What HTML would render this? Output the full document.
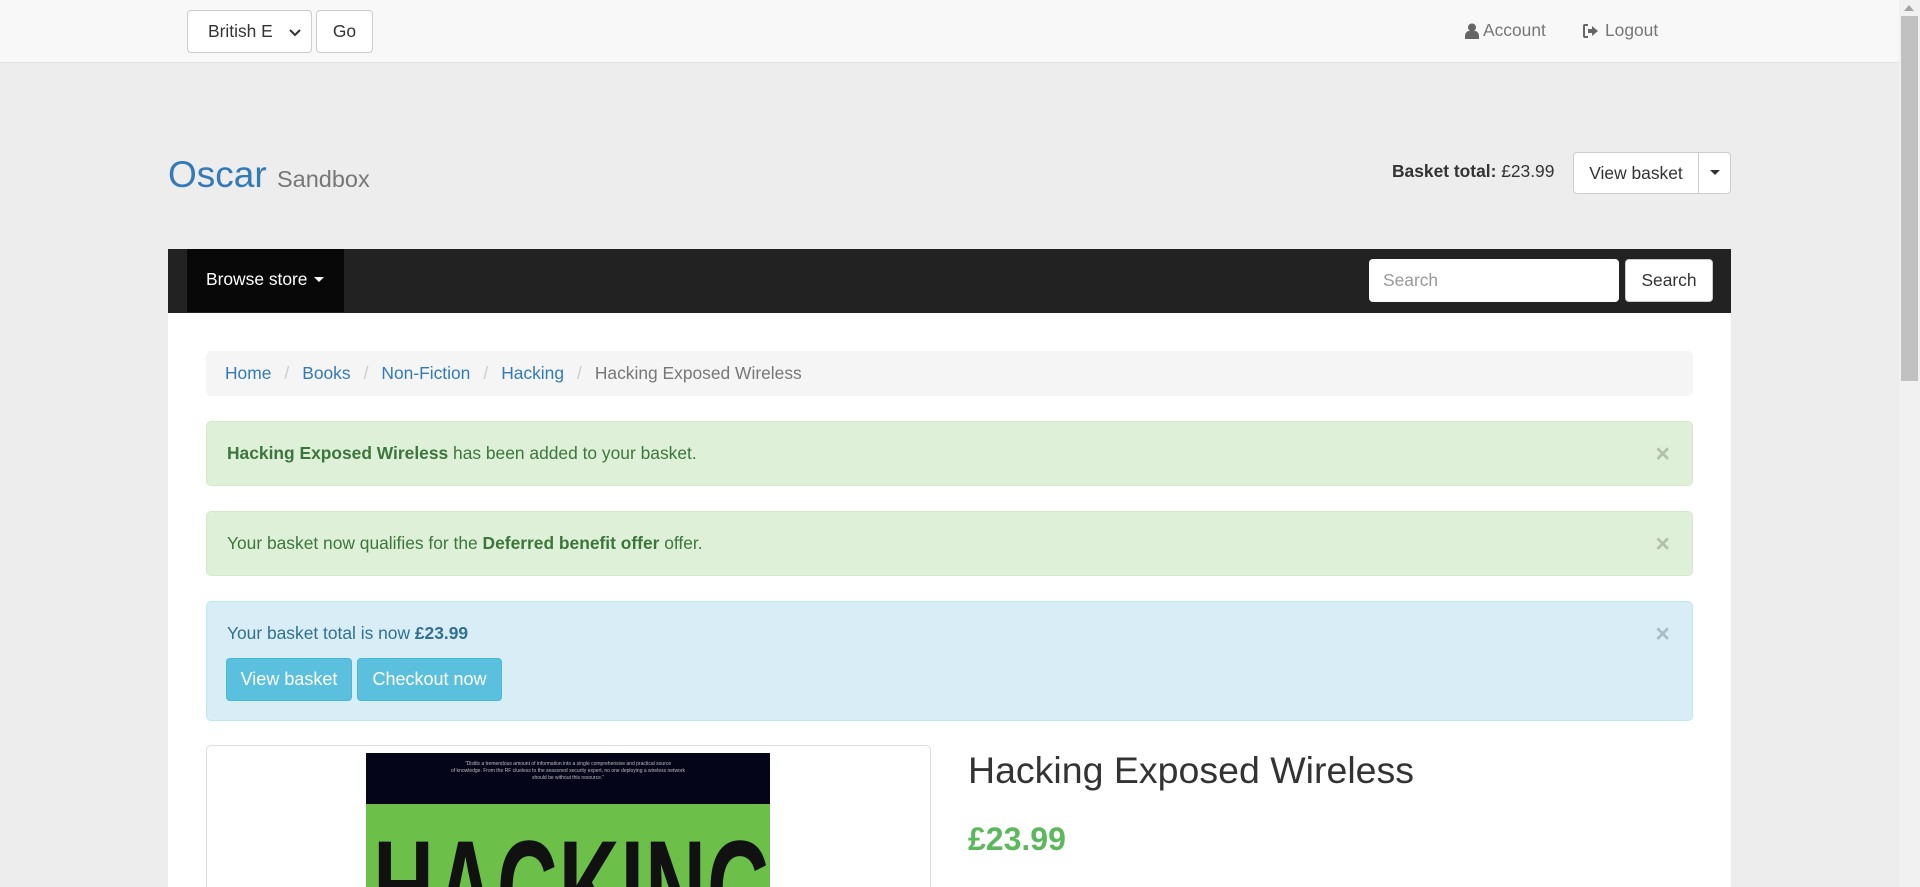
<!DOCTYPE html>
<html><head><meta charset="utf-8"><style>
*{box-sizing:border-box;margin:0;padding:0}
html,body{overflow:hidden}
body{width:1920px;height:887px;background:#ededed;font-family:"Liberation Sans",sans-serif;font-size:17.4px;color:#333;position:relative}
.abs{position:absolute}
.top{left:0;top:0;width:1899px;height:63px;background:#f8f8f8;border-bottom:1px solid #e3e3e3}
.btn{position:absolute;background:#fff;border:1px solid #ccc;border-radius:4px;display:flex;align-items:center;justify-content:center;color:#333}
.sb{left:1899px;top:0;width:21px;height:887px;background:#f1f1f1}
.alert{position:absolute;left:206px;width:1487px;border-radius:5px;border:1px solid}
.ok{background:#dff0d8;border-color:#d6e9c6;color:#3c763d}
.info{background:#d9edf7;border-color:#bce8f1;color:#31708f}
.x{position:absolute;right:22px;top:20px;font-size:25px;font-weight:bold;color:#000;opacity:.2;line-height:1}
.bc a{color:#337ab7}
.sep{color:#ccc;padding:0 13px}
</style></head><body>
<div class="abs top"></div>
<div class="btn" style="left:187px;top:10px;width:125px;height:43px;justify-content:flex-start;padding-left:20px">British E<svg style="position:absolute;right:10px;top:18px" width="12" height="8" viewBox="0 0 12 8"><path d="M1 1l5 5 5-5" stroke="#333" stroke-width="2" fill="none"/></svg></div>
<div class="btn" style="left:316px;top:10px;width:57px;height:43px">Go</div>
<svg class="abs" style="left:1465px;top:23px" width="14" height="16" viewBox="0 0 14 16"><circle cx="7" cy="4.5" r="4" fill="#666"/><path d="M0 16v-3c0-3 2-5 4-5h6c2 0 4 2 4 5v3z" fill="#666"/></svg>
<div class="abs" style="left:1483px;top:20px;color:#777">Account</div>
<svg class="abs" style="left:1583px;top:24px" width="16" height="14" viewBox="0 0 16 14"><path d="M5 1H2Q1 1 1 2v10q0 1 1 1h3" stroke="#666" stroke-width="2" fill="none"/><path d="M5 5h4V2l6 5-6 5V9H5z" fill="#666"/></svg>
<div class="abs" style="left:1605px;top:20px;color:#777">Logout</div>

<div class="abs" style="left:168px;top:154px;font-size:37px;color:#337ab7">Oscar <span style="font-size:23.5px;color:#777">Sandbox</span></div>
<div class="abs" style="left:1392px;top:161px"><b>Basket total:</b> £23.99</div>
<div class="btn" style="left:1573px;top:152px;width:126px;height:42px;border-radius:4px 0 0 4px">View basket</div>
<div class="btn" style="left:1698px;top:152px;width:33px;height:42px;border-radius:0 4px 4px 0"><svg width="10" height="6"><path d="M0 0h10L5 5z" fill="#333"/></svg></div>

<div class="abs" style="left:168px;top:249px;width:1563px;height:64px;background:#222"></div>
<div class="abs" style="left:187px;top:249px;width:157px;height:63px;background:#080808;color:#fff;padding:20px 0 0 19px">Browse store <svg width="10" height="6" style="vertical-align:middle;margin-left:2px"><path d="M0 0h10L5 5z" fill="#fff"/></svg></div>
<div class="abs" style="left:1369px;top:259px;width:250px;height:43px;background:#fff;border-radius:4px;color:#999;padding:11px 0 0 14px">Search</div>
<div class="btn" style="left:1625px;top:259px;width:88px;height:43px">Search</div>

<div class="abs" style="left:168px;top:313px;width:1563px;height:574px;background:#fff"></div>
<div class="abs bc" style="left:206px;top:351px;width:1487px;height:45px;background:#f5f5f5;border-radius:5px;padding:12px 0 0 19px"><a>Home</a><span class="sep">/</span><a>Books</a><span class="sep">/</span><a>Non-Fiction</a><span class="sep">/</span><a>Hacking</a><span class="sep">/</span><span style="color:#777">Hacking Exposed Wireless</span></div>

<div class="alert ok" style="top:421px;height:65px;padding:21px 0 0 20px"><b>Hacking Exposed Wireless</b> has been added to your basket.<span class="x">×</span></div>
<div class="alert ok" style="top:511px;height:65px;padding:21px 0 0 20px">Your basket now qualifies for the <b>Deferred benefit offer</b> offer.<span class="x">×</span></div>
<div class="alert info" style="top:601px;height:120px;padding:21px 0 0 20px">Your basket total is now <b>£23.99</b><span class="x">×</span>
<div class="btn" style="left:19px;top:56px;width:126px;height:43px;background:#5bc0de;border-color:#46b8da;color:#fff;font-size:18px">View basket</div>
<div class="btn" style="left:150px;top:56px;width:145px;height:43px;background:#5bc0de;border-color:#46b8da;color:#fff;font-size:18px">Checkout now</div></div>

<div class="abs" style="left:206px;top:745px;width:725px;height:142px;border:1px solid #ddd;border-bottom:none;border-radius:5px 5px 0 0"></div>
<div class="abs" style="left:366px;top:753px;width:404px;height:134px;background:#6cc04a;overflow:hidden">
<div style="height:51px;background:#05051a;color:#bbb;font-size:5px;text-align:center;padding-top:8px;line-height:7px">"Distils a tremendous amount of information into a single comprehensive and practical source<br>of knowledge. From the RF clueless to the seasoned security expert, no one deploying a wireless network<br>should be without this resource."</div>
<div style="margin-top:16px;padding-left:12px;font-size:140px;font-weight:bold;color:#111;letter-spacing:2px;line-height:1;transform:scaleX(.6);transform-origin:left;white-space:nowrap">HACKING</div>
</div>
<div class="abs" style="left:968px;top:749px;font-size:37.5px">Hacking Exposed Wireless</div>
<div class="abs" style="left:968px;top:821px;font-size:32px;font-weight:bold;color:#5cb85c">£23.99</div>

<div class="abs sb"></div>
<div class="abs" style="left:1901px;top:16px;width:17px;height:365px;background:#c1c1c1"></div>
<svg class="abs" style="left:1904px;top:5px" width="10" height="6"><path d="M0 6h10L5 0z" fill="#a3a3a3"/></svg>
</body></html>
